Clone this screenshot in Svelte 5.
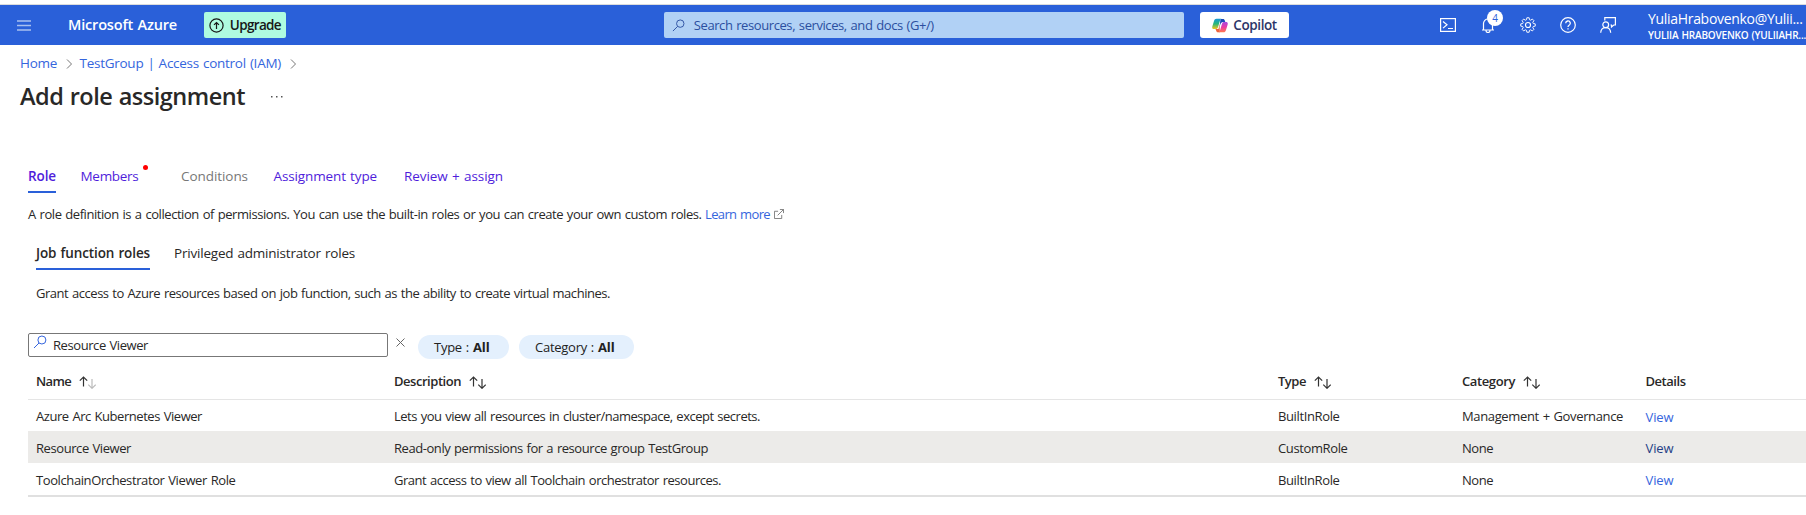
<script>
  const sortIcons = { up: 'M4.5 10.5V1M.8 4.700L4.500 1l3.700 3.700', down: 'M13 3v9.300M9.300 8.600l3.700 3.700 3.700-3.700' };

  const tabs = [
    { label: 'Role', w: 28, gap: 24.5, active: true },
    { label: 'Members', w: 58, gap: 42.5, dot: true },
    { label: 'Conditions', w: 67, gap: 25.5, disabled: true },
    { label: 'Assignment type', w: 103.5, gap: 27 },
    { label: 'Review + assign', w: 99, gap: 0 }
  ];
  const columns = [
    { label: 'Name', w: 35, sort: 'asc' },
    { label: 'Description', w: 67, sort: 'both' },
    { label: 'Type', w: 28, sort: 'both' },
    { label: 'Category', w: 53, sort: 'both' },
    { label: 'Details', w: 40 }
  ];
  const roles = [
    { cells: [['Azure Arc Kubernetes Viewer', 166], ['Lets you view all resources in cluster/namespace, except secrets.', 366], ['BuiltInRole', 61.5], ['Management + Governance', 161]] },
    { cells: [['Resource Viewer', 95], ['Read-only permissions for a resource group TestGroup', 314], ['CustomRole', 69.5], ['None', 31]], hover: true },
    { cells: [['ToolchainOrchestrator Viewer Role', 199.5], ['Grant access to view all Toolchain orchestrator resources.', 327], ['BuiltInRole', 61.5], ['None', 31]] }
  ];

  // Spreads the letters of a label evenly over the given width.
  function fit(node, width) {
    node.style.display = 'inline-block';
    node.style.whiteSpace = 'nowrap';
    const natural = node.getBoundingClientRect().width;
    node.style.letterSpacing = `${(width - natural) / node.textContent.length}px`;
  }
</script>

{#snippet magnifier(size)}
  <svg width={size} height={size} viewBox="0 0 14 14" fill="none" stroke="currentColor"><circle cx="8.9" cy="5" r="4" /><path d="M6 8L1 13" /></svg>
{/snippet}

<div class="page">
  <header class="topbar">
    <svg class="burger" width="14" height="11" viewBox="0 0 14 11"><path d="M0 1h14M0 5.5h14M0 10h14" stroke="currentColor" stroke-width="1.6" /></svg>
    <div class="brand"><span use:fit={109}>Microsoft Azure</span></div>
    <button class="upgrade">
      <svg width="15" height="15" viewBox="0 0 15 15" fill="none" stroke="currentColor" stroke-width="1.2"><circle cx="7.5" cy="7.5" r="6.6" /><path d="M7.5 11V4.6M5 6.9l2.5-2.4L10 6.9" /></svg>
      <span use:fit={51}>Upgrade</span>
    </button>
    <div class="search">
      {@render magnifier(13)}
      <span use:fit={240}>Search resources, services, and docs (G+/)</span>
    </div>
    <button class="copilot">
      <svg width="16" height="15" viewBox="0 0 16 15">
        <defs>
          <linearGradient id="cpA" x1="0" y1="0" x2="0" y2="1"><stop offset="0" stop-color="#1697d8" /><stop offset=".5" stop-color="#28b77a" /><stop offset="1" stop-color="#f2c51c" /></linearGradient>
          <linearGradient id="cpB" x1="0" y1="0" x2="0" y2="1"><stop offset="0" stop-color="#a64be0" /><stop offset=".5" stop-color="#eb3aa4" /><stop offset="1" stop-color="#ff7a4c" /></linearGradient>
        </defs>
        <path d="M8.5 1H11c1 0 1.500.6 1.800 1.500L13.300 4H11C9.500 4 8.800 5 8.400 6.300L7.500 9" fill="#1a48b8" />
        <path d="M4.500.7h5.200C8.600.9 8.200 2 7.700 3.600L6 9.200C5.500 10.600 4.800 11 3.600 11H2C.4 11-.1 9.900.4 8.300L2 3C2.500 1.500 3.200.7 4.500.7z" fill="url(#cpA)" />
        <path d="M7.500 6L6.500 11H3c.9 0 .9.900 1.300 1.900.3.800.7 1.300 1.600 1.300h2z" fill="#ee633b" />
        <path d="M11.500 14.300H6.300c1.100-.2 1.500-1.300 2-2.900L10 5.800C10.500 4.400 11.200 4 12.400 4H14c1.600 0 2.100 1.100 1.600 2.700L14 12c-.5 1.500-1.200 2.300-2.500 2.300z" fill="url(#cpB)" />
      </svg>
      <span use:fit={43.5}>Copilot</span>
    </button>
    <nav class="tools">
      <svg width="16" height="14" viewBox="0 0 16 14"><rect x=".6" y=".6" width="14.800" height="12.800" /><path d="M3 3.500l4 3.300-4 3.300M8 10.500h5" /></svg>
      <span class="bell">
        <svg width="14" height="15" viewBox="0 0 14 15"><path d="M1 12h12M2.500 12V5.500a4.500 4.500 0 0 1 9 0V12M5 12.500a2 2 0 0 0 4 0" /></svg>
        <b>4</b>
      </span>
      <svg width="16" height="16" viewBox="0 0 17 17"><path d="M7.300.8h2.400l.4 2.100 1.200.5 1.800-1.200 1.700 1.700-1.200 1.800.5 1.200 2.100.4v2.400l-2.100.4-.5 1.200 1.200 1.800-1.700 1.700-1.800-1.200-1.200.5-.4 2.100H7.300l-.4-2.100-1.200-.5-1.800 1.200-1.700-1.700 1.200-1.800-.5-1.200-2.100-.4V7.300l2.100-.4.5-1.200-1.200-1.800 1.700-1.700 1.800 1.200 1.200-.5z" stroke-width="1" /><circle cx="8.500" cy="8.500" r="2.700" /></svg>
      <svg width="16" height="16" viewBox="0 0 16 16"><circle cx="8" cy="8" r="7.300" /><path d="M5.700 6.300a2.300 2.300 0 1 1 3.400 2C8.300 8.800 8 9.200 8 10.100M8 11.200v1.400" stroke-width="1.300" /></svg>
      <svg width="16" height="16" viewBox="0 0 16 16"><path d="M4.800 3.500V.7h10.600V8h-1.600l-2.300 2V8h-1" /><circle cx="5.700" cy="7.700" r="2.900" /><path d="M.7 15.700c.2-3 2.300-5 5-5s4.800 2 5 5" /></svg>
    </nav>
    <div class="account">
      <div class="mail"><span use:fit={154.5}>YuliaHrabovenko@Yulii...</span></div>
      <div class="tenant"><span use:fit={158}>YULIIA HRABOVENKO (YULIIAHR...</span></div>
    </div>
  </header>

  <nav class="crumbs">
    <a href="#home"><span use:fit={37}>Home</span></a>
    <svg width="7" height="10" viewBox="0 0 7 10"><path d="M1 .5L5.500 5 1 9.500" /></svg>
    <a href="#iam"><span use:fit={201.5}>TestGroup | Access control (IAM)</span></a>
    <svg width="7" height="10" viewBox="0 0 7 10"><path d="M1 .5L5.500 5 1 9.500" /></svg>
  </nav>
  <div class="heading">
    <h1><span use:fit={225}>Add role assignment</span></h1>
    <svg width="12" height="2" viewBox="0 0 12 2"><path d="M0 0h1.500v1.500H0zM5 0h1.500v1.500H5zM10 0h1.500v1.500H10z" fill="#555" /></svg>
  </div>

  <main>
    <nav class="tabs">
      {#each tabs as t}
        <div class="tab" class:active={t.active} class:disabled={t.disabled} style="margin-right:{t.gap}px">
          <span use:fit={t.w}>{t.label}</span>
          {#if t.dot}<i></i>{/if}
        </div>
      {/each}
    </nav>
    <p class="intro">
      <span use:fit={673.5}>A role definition is a collection of permissions. You can use the built-in roles or you can create your own custom roles.</span>
      <a href="#learn"><span use:fit={65}>Learn more</span></a>
      <svg width="10" height="10" viewBox="0 0 11 11" fill="none" stroke="#777"><path d="M4.500 2.500h-4v8h8v-4M6.500.5h4v4M10.500.5L4 7" /></svg>
    </p>
    <nav class="subtabs">
      <div class="subtab active"><span use:fit={114}>Job function roles</span></div>
      <div class="subtab"><span use:fit={181}>Privileged administrator roles</span></div>
    </nav>
    <p class="note"><span use:fit={574}>Grant access to Azure resources based on job function, such as the ability to create virtual machines.</span></p>

    <div class="filters">
      <div class="field">{@render magnifier(14)}<span use:fit={95}>Resource Viewer</span></div>
      <svg class="clear" width="9" height="9" viewBox="0 0 9 9"><path d="M.5.5l8 8M8.500.5l-8 8" stroke="#666" /></svg>
      <button class="pill type"><span use:fit={35}>Type :</span><b use:fit={16.5}>All</b></button>
      <button class="pill cat"><span use:fit={59}>Category :</span><b use:fit={16.5}>All</b></button>
    </div>

    <div class="table">
      <div class="row head">
        {#each columns as c}
          <div>
            <span use:fit={c.w}>{c.label}</span>
            {#if c.sort}
              <svg width="17" height="13" viewBox="0 0 17 13"><path d={sortIcons.up} /><path class:faint={c.sort === 'asc'} d={sortIcons.down} /></svg>
            {/if}
          </div>
        {/each}
      </div>
      {#each roles as r}
        <div class="row" class:hover={r.hover}>
          {#each r.cells as [text, w]}
            <div><span use:fit={w}>{text}</span></div>
          {/each}
          <div><a href="#view"><span use:fit={28}>View</span></a></div>
        </div>
      {/each}
    </div>
  </main>
</div>

<style>
  :global(body) { background: #fff; overflow: hidden; }
  .page { font: 13px/20px "Open Sans", "Noto Sans", sans-serif; word-spacing: 0.800px; color: #292827; padding-top: 4px; height: 511px; overflow: hidden; }
  a { color: #3565dd; text-decoration: none; }
  button { border: 0; font: inherit; word-spacing: inherit; margin: 0; padding: 0; display: flex; align-items: center; }
  svg { flex: none; fill: none; }
  p, h1 { margin: 0; font-weight: 400; }

  .topbar { display: flex; align-items: center; height: 40px; border-top: 1px solid #dcdcdc; background: #2a60d9; color: #fff; padding-left: 17px; }
  .burger { color: #a9c0f0; }
  .brand { font-size: 14.500px; font-weight: 550; width: 136px; padding-left: 37px; }
  .upgrade { width: 82px; height: 26px; border-radius: 2px; background: #affbe0; color: #171717; padding-left: 5px; gap: 6px; font-size: 13.500px; font-weight: 550; box-sizing: border-box; }
  .search { width: 521px; height: 26px; box-sizing: border-box; border-radius: 2px; background: #b1d1f5; color: #2b4fa0; margin-left: 378px; padding-left: 8px; display: flex; align-items: center; gap: 9px; }
  .copilot { width: 89px; height: 26px; box-sizing: border-box; border-radius: 3px; background: #fff; color: #2c3568; margin-left: 16px; padding-left: 12px; gap: 5px; font-size: 13.500px; font-weight: 550; }
  .tools { display: flex; align-items: center; margin-left: 151px; gap: 24px; width: 208px; }
  .tools svg { stroke: #fff; stroke-width: 1.200; display: block; }
  .bell { position: relative; margin: 0 1px; }
  .bell b { position: absolute; left: 6px; top: -8px; width: 16px; height: 16px; border-radius: 50%; background: #fff; color: #2a60d9; font: 10px/16px "Open Sans", sans-serif; text-align: center; }
  .account { width: 158px; flex: none; }
  .mail { font-size: 14px; line-height: 18px; height: 19px; }
  .tenant { font-size: 10px; line-height: 12px; height: 12px; font-weight: 600; }
  .account span { vertical-align: top; }

  .crumbs { display: flex; align-items: center; height: 19px; padding: 8px 0 0 20px; font-size: 13.500px; }
  .crumbs a { display: flex; }
  .crumbs svg { stroke: #777; margin: 2px 7px 0 8.500px; }
  .heading { display: flex; align-items: center; height: 32px; padding: 8px 0 0 20px; }
  h1 { font-size: 23.500px; font-weight: 600; line-height: 32px; }
  .heading svg { margin: 1px 0 0 26px; }

  main { padding: 54px 0 0 28px; }
  .tabs { display: flex; font-size: 13.500px; line-height: 20px; height: 27px; color: #4f1ddb; }
  .tab { position: relative; height: 25px; flex: none; }
  .tab.active { font-weight: 600; border-bottom: 2px solid #2a60d9; }
  .tab.disabled { color: #777; }
  .tab i { position: absolute; right: -9px; top: -1px; width: 5px; height: 5px; border-radius: 50%; background: #f00; }
  .tab span, .subtab span { vertical-align: top; }
  .intro { display: flex; align-items: center; padding-top: 11px; height: 20px; gap: 3.500px; }
  .intro a, .note { display: flex; }
  .subtabs { display: flex; gap: 24px; padding: 19px 0 0 8px; height: 27px; font-size: 13.500px; }
  .subtab { height: 25px; }
  .subtab.active { font-weight: 600; border-bottom: 2px solid #2a60d9; }
  .note { padding: 13px 0 0 8px; height: 20px; }

  .filters { display: flex; align-items: flex-start; padding-top: 30px; height: 30px; }
  .field { display: flex; align-items: center; box-sizing: border-box; width: 360px; height: 24px; border: 1px solid #777; border-radius: 2px; padding-left: 4px; gap: 6px; }
  .field :global(svg) { color: #3565dd; margin-top: -6px; }
  .clear { margin: 5px 13px 0 8px; }
  .pill { height: 24px; margin-top: 2px; border-radius: 12px; background: #e4f0fd; color: #222; gap: 4px; padding-left: 16px; box-sizing: border-box; }
  .pill b { font-weight: 700; }
  .type { width: 91px; margin-right: 10px; }
  .cat { width: 115px; }

  .row { display: grid; grid-template-columns: 358px 884px 184px 183.500px 1fr; padding-left: 8px; height: 32px; align-items: center; }
  .row > div { display: flex; align-items: center; padding-top: 1px; }
  .row a { display: flex; padding-top: 1px; }
  .head { height: 36px; font-weight: 600; border-bottom: 1px solid #e5e5e5; }
  .head > div { gap: 7.500px; padding-top: 0; }
  .head svg { stroke: #333; stroke-width: 1.200; margin-top: 3px; }
  .head .faint { stroke: #bbb; }
  .hover { background: #ecebe9; }
  .hover a { color: #243f86; }
  .table { border-bottom: 2px solid #e0e0e0; }
  .head + .row { height: 31px; }
</style>
